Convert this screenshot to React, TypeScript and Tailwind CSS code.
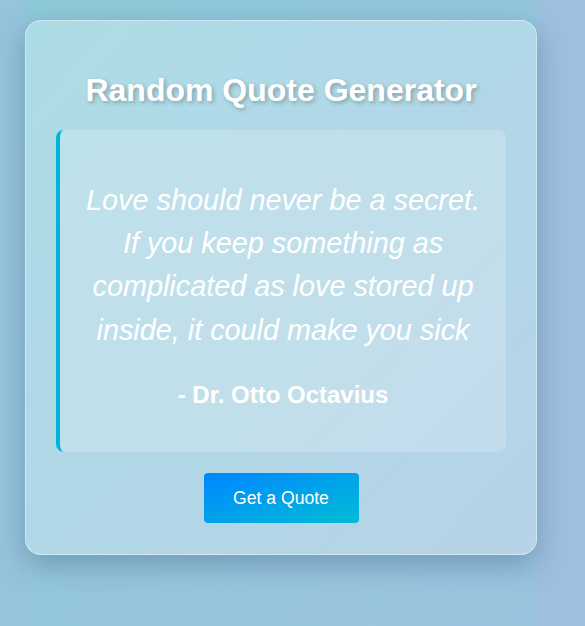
import { useState } from "react";

const quotes = [
    {
        text: "Love should never be a secret. If you keep something as complicated as love stored up inside, it could make you sick",
        author: "Dr. Otto Octavius",
    },
];

const App = () => {
    const [index, setIndex] = useState(0);
    const quote = quotes[index];

    const nextQuote = () => {
        setIndex((i) => (i + 1) % quotes.length);
    };

    return (
        <div
            className="min-h-screen bg-gradient-to-r from-[#95c5dc] to-[#9fc0e0]"
            style={{ fontFamily: '"Liberation Sans", Arial, sans-serif' }}
        >
            <div className="ml-[25px] min-h-screen w-[512px] bg-gradient-to-br from-[#8ecad9] to-[#9bc4df] pt-[20px]">
                {/* Card */}
                <div className="rounded-2xl border border-white/40 bg-gradient-to-br from-[#acdce6] to-[#b6d3e8] px-[30px] pb-[31px] pt-[50px] shadow-[0_10px_30px_rgba(40,70,110,0.35)]">
                    <h1 className="mb-[21px] text-center text-[32px] font-bold leading-[38px] text-white [text-shadow:2px_2px_4px_rgba(0,0,0,0.25)]">
                        Random Quote Generator
                    </h1>

                    {/* Quote box */}
                    <div className="rounded-lg border-l-4 border-[#00b4d8] bg-white/20 px-[22px] pb-[39px] pt-[49px] text-center">
                        <p className="text-[28.8px] italic leading-[43.2px] text-white">
                            {quote.text}
                        </p>
                        <p className="mt-[25px] text-[24px] font-bold leading-[36px] text-white">
                            - {quote.author}
                        </p>
                    </div>

                    {/* Button */}
                    <div className="mt-[21px] flex justify-center">
                        <button
                            onClick={nextQuote}
                            className="h-[50px] w-[155px] rounded bg-gradient-to-br from-[#0084ff] to-[#00bcd4] text-[17.6px] text-white"
                        >
                            Get a Quote
                        </button>
                    </div>
                </div>
            </div>
        </div>
    );
};

export default App;
